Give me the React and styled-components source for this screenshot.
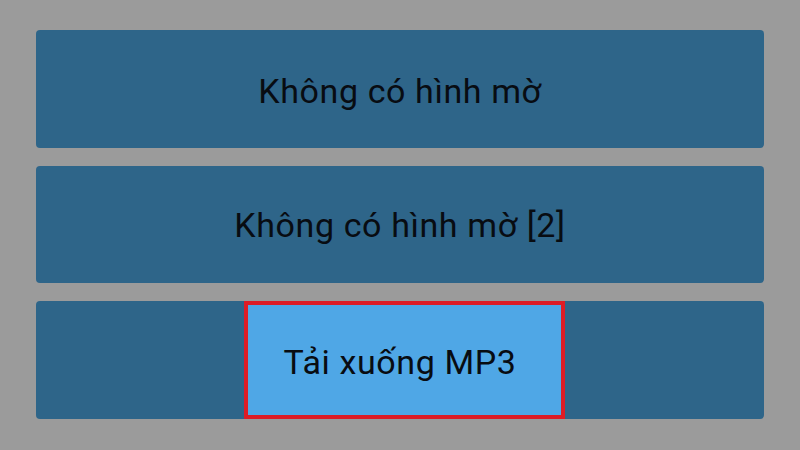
import React from "react";
import styled, { createGlobalStyle } from "styled-components";

const Global = createGlobalStyle`
  html, body { margin: 0; padding: 0; background: #9b9b9b; }
  body { font-family: Roboto, "Liberation Sans", sans-serif; }
`;

const Page = styled.div`
  width: 800px;
  height: 450px;
  box-sizing: border-box;
  padding: 30px 36px 0;
  display: flex;
  flex-direction: column;
  gap: 18px;
  background: #9b9b9b;
`;

const Option = styled.div`
  position: relative;
  height: 117.5px;
  border-radius: 4px;
  background: #2e6589;
  display: flex;
  align-items: center;
  justify-content: center;
  padding-top: ${(p) => p.$shift || 3}px;
  box-sizing: border-box;
`;

const Label = styled.span`
  position: relative;
  z-index: 1;
  font-size: 34px;
  color: #080c12;
  letter-spacing: 0.6px;
`;

const Highlight = styled.div`
  position: absolute;
  top: 0;
  bottom: 0;
  left: 208px;
  width: 321px;
  box-sizing: border-box;
  background: #4fa7e6;
  border: 4px solid #de1c26;
`;

export default function App() {
  return (
    <>
      <Global />
      <Page>
        <Option $shift={4}>
          <Label>Không có hình mờ</Label>
        </Option>
        <Option $shift={2}>
          <Label>Không có hình mờ [2]</Label>
        </Option>
        <Option $shift={4}>
          <Highlight />
          <Label>Tải xuống MP3</Label>
        </Option>
      </Page>
    </>
  );
}
